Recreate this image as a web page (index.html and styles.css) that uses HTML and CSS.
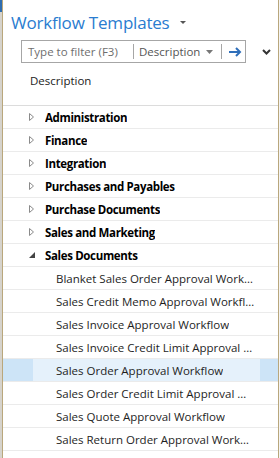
FILE: index.html
```html
<!DOCTYPE html>
<html>
<head>
<meta charset="utf-8">
<link rel="stylesheet" href="styles.css">
</head>
<body>
<div class="frame">
  <div class="edge"></div>
  <div class="panel">
    <div class="titlebar">
      <span class="title">Workflow Templates</span>
      <svg class="title-caret" width="6" height="3" viewBox="0 0 6 3"><polygon points="0,0 6,0 3,3" fill="#555"/></svg>
    </div>
    <div class="filterrow">
      <div class="filterbox">
        <span class="filter-input">Type to filter (F3)</span>
        <span class="sep"></span>
        <span class="filter-field">Description</span>
        <svg class="field-caret" width="7" height="4" viewBox="0 0 7 4"><polygon points="0,0 7,0 3.5,4" fill="#777"/></svg>
        <span class="sep"></span>
        <svg class="go" width="13" height="10" viewBox="0 0 13 10"><path d="M0 5H11M7 1L11 5L7 9" fill="none" stroke="#2f6fba" stroke-width="2"/></svg>
      </div>
      <svg class="chev" width="9" height="6" viewBox="0 0 9 6"><path d="M1 1L4.5 4.5L8 1" fill="none" stroke="#333" stroke-width="2"/></svg>
    </div>
    <div class="colhead">Description</div>
    <div class="list">
      <div class="row group"><span class="tw"><svg width="5" height="8" viewBox="0 0 5 8"><polygon points="0.5,0.5 4.5,4 0.5,7.5" fill="none" stroke="#8a8a8a"/></svg></span><span class="txt">Administration</span></div>
      <div class="row group"><span class="tw"><svg width="5" height="8" viewBox="0 0 5 8"><polygon points="0.5,0.5 4.5,4 0.5,7.5" fill="none" stroke="#8a8a8a"/></svg></span><span class="txt">Finance</span></div>
      <div class="row group"><span class="tw"><svg width="5" height="8" viewBox="0 0 5 8"><polygon points="0.5,0.5 4.5,4 0.5,7.5" fill="none" stroke="#8a8a8a"/></svg></span><span class="txt">Integration</span></div>
      <div class="row group"><span class="tw"><svg width="5" height="8" viewBox="0 0 5 8"><polygon points="0.5,0.5 4.5,4 0.5,7.5" fill="none" stroke="#8a8a8a"/></svg></span><span class="txt">Purchases and Payables</span></div>
      <div class="row group"><span class="tw"><svg width="5" height="8" viewBox="0 0 5 8"><polygon points="0.5,0.5 4.5,4 0.5,7.5" fill="none" stroke="#8a8a8a"/></svg></span><span class="txt">Purchase Documents</span></div>
      <div class="row group"><span class="tw"><svg width="5" height="8" viewBox="0 0 5 8"><polygon points="0.5,0.5 4.5,4 0.5,7.5" fill="none" stroke="#8a8a8a"/></svg></span><span class="txt">Sales and Marketing</span></div>
      <div class="row group"><span class="tw"><svg width="6" height="6" viewBox="0 0 6 6"><polygon points="6,0 6,6 0,6" fill="#444"/></svg></span><span class="txt">Sales Documents</span></div>
      <div class="row child"><span class="txt">Blanket Sales Order Approval Workflow</span></div>
      <div class="row child"><span class="txt">Sales Credit Memo Approval Workflow</span></div>
      <div class="row child"><span class="txt">Sales Invoice Approval Workflow</span></div>
      <div class="row child"><span class="txt">Sales Invoice Credit Limit Approval Workflow</span></div>
      <div class="row child selected"><span class="txt">Sales Order Approval Workflow</span></div>
      <div class="row child"><span class="txt">Sales Order Credit Limit Approval Workflow</span></div>
      <div class="row child"><span class="txt">Sales Quote Approval Workflow</span></div>
      <div class="row child"><span class="txt">Sales Return Order Approval Workflow</span></div>
    </div>
  </div>
  <div class="edge-r"></div>
</div>
</body>
</html>
```
FILE: styles.css
```css
html, body {
  margin: 0;
  padding: 0;
  background: #fff;
}
body {
  width: 280px;
  height: 458px;
  overflow: hidden;
  font-family: "Open Sans", "Noto Sans", sans-serif;
}
.frame {
  display: flex;
  height: 458px;
}
.edge {
  width: 2px;
  background: linear-gradient(#2f6db0 0 12px, #d6d3cc 12px);
  border-right: 1px solid #b9a77c;
  flex: none;
}
.edge-r {
  width: 1px;
  border-left: 1px solid #b9a77c;
  background: #f4f4f4;
  flex: none;
}
.panel {
  flex: 1;
  min-width: 0;
  display: flex;
  flex-direction: column;
}
.titlebar {
  height: 37px;
  padding-left: 8px;
  display: flex;
  align-items: center;
  gap: 10px;
  padding-top: 7px;
  box-sizing: border-box;
}
.title {
  font-size: 17px;
  color: #2a7cd0;
  letter-spacing: -0.2px;
  line-height: 1;
}
.title-caret {
  margin-top: 1px;
}
.filterrow {
  display: flex;
  align-items: center;
  height: 23px;
  margin-top: 3px;
}
.filterbox {
  margin-left: 18px;
  width: 225px;
  height: 23px;
  box-sizing: border-box;
  border: 1px solid #a6a6a6;
  display: flex;
  align-items: center;
  font-size: 11.5px;
  color: #666;
}
.filter-input {
  padding-left: 6px;
  width: 105px;
  color: #6e6e6e;
}
.sep {
  width: 1px;
  height: 15px;
  background: #a6a6a6;
}
.filter-field {
  padding-left: 5px;
  width: 64px;
  color: #555;
}
.field-caret {
  margin: 0 8px 0 3px;
}
.go {
  margin-left: 7px;
}
.chev {
  margin-left: 16px;
}
.colhead {
  height: 43px;
  padding-left: 27px;
  font-size: 11.5px;
  color: #222;
  display: flex;
  align-items: center;
  box-sizing: border-box;
  padding-bottom: 8px;
  border-bottom: 1px solid #dcdcdc;
}
.list {
  display: flex;
  flex-direction: column;
}
.row {
  height: 23px;
  box-sizing: border-box;
  border-bottom: 1px solid #ebebeb;
  display: flex;
  align-items: center;
  font-size: 11.5px;
  color: #1e1e1e;
}
.group .txt {
  font-weight: bold;
  font-size: 11.5px;
  letter-spacing: -0.35px;
  color: #000;
}
.tw {
  width: 16px;
  margin-left: 26px;
  display: flex;
  align-items: center;
}
.child .txt {
  margin-left: 53px;
}
.txt {
  white-space: nowrap;
  overflow: hidden;
  text-overflow: ellipsis;
  max-width: 199px;
}
.selected {
  background: linear-gradient(90deg, #cde4f7 0 30px, #e5f1fb 30px 257px, #cde4f7 257px);
}
```
